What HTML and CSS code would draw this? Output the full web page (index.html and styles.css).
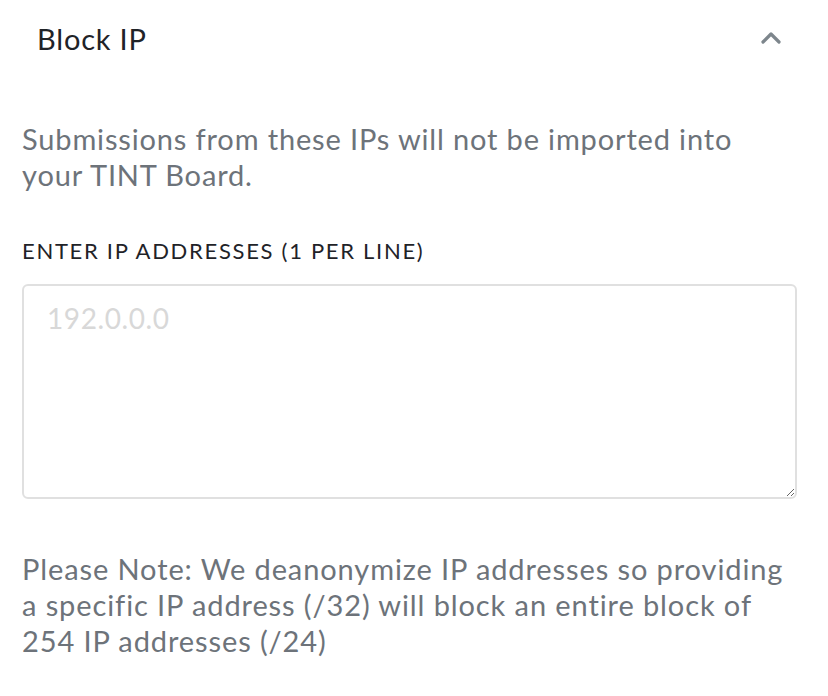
FILE: index.html
```html
<!DOCTYPE html>
<html lang="en">
<head>
    <meta charset="UTF-8">
    <meta name="viewport" content="width=device-width,initial-scale=1">
    <title>Block IP</title>
    <link rel="stylesheet" href="styles.css">
</head>
<body>
    <div class="panel">
        <div class="panel-header">
            <h2>Block IP</h2>
            <button class="toggle" aria-label="Collapse">
                <svg width="22" height="14" viewBox="0 0 22 14">
                    <path d="M3 11 L11 3 L19 11" fill="none" stroke="#7d868c" stroke-width="3.2" stroke-linecap="round" stroke-linejoin="round"/>
                </svg>
            </button>
        </div>

        <div class="panel-body">
            <p class="description">Submissions from these IPs will not be imported into your TINT Board.</p>

            <label class="field-label" for="ips">Enter IP addresses (1 per line)</label>
            <textarea id="ips" class="ip-input" placeholder="192.0.0.0"></textarea>

            <p class="note">Please Note: We deanonymize IP addresses so providing a specific IP address (/32) will block an entire block of 254 IP addresses (/24)</p>
        </div>
    </div>
</body>
</html>
```

FILE: styles.css
```css
* {
    margin: 0;
    padding: 0;
    box-sizing: border-box;
}

body {
    font-family: 'Lato', 'Liberation Sans', sans-serif;
    background-color: #fff;
    color: #1f2328;
}

.panel {
    width: 828px;
    min-height: 696px;
}

.panel-header {
    display: flex;
    align-items: center;
    justify-content: space-between;
    padding: 18px 46px 0 37px;
    height: 58px;
}

.panel-header h2 {
    font-size: 29px;
    font-weight: 400;
    letter-spacing: 0.8px;
    color: #1f2328;
}

.toggle {
    background: none;
    border: none;
    display: flex;
    cursor: pointer;
}

.panel-body {
    padding: 63px 31px 0 22px;
}

.description {
    font-size: 29px;
    line-height: 36px;
    letter-spacing: 0.85px;
    color: #6d737a;
    width: 740px;
}

.field-label {
    display: block;
    margin-top: 44px;
    font-size: 22px;
    line-height: 28px;
    letter-spacing: 1.7px;
    text-transform: uppercase;
    color: #1f2328;
}

.ip-input {
    display: block;
    width: 100%;
    height: 215px;
    margin-top: 19px;
    padding: 15px 23px;
    border: 2px solid #e0e0e0;
    border-radius: 6px;
    font-family: inherit;
    font-size: 28px;
    letter-spacing: 0.6px;
    color: #1f2328;
    resize: vertical;
    outline: none;
}

.ip-input::placeholder {
    color: #d8d8d8;
}

.note {
    margin-top: 52px;
    font-size: 29px;
    line-height: 36px;
    letter-spacing: 0.9px;
    color: #6d737a;
}
```
